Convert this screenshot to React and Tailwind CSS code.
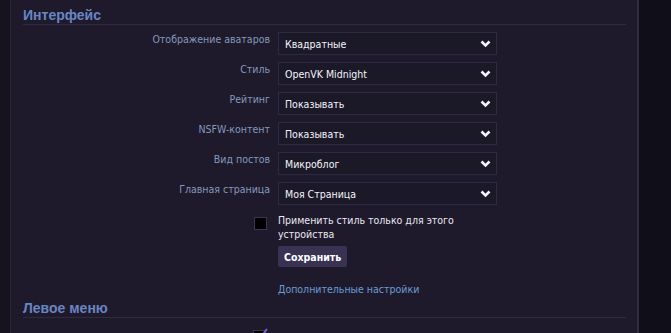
const rows = [
  ['Отображение аватаров', 'Квадратные'],
  ['Стиль', 'OpenVK Midnight'],
  ['Рейтинг', 'Показывать'],
  ['NSFW-контент', 'Показывать'],
  ['Вид постов', 'Микроблог'],
  ['Главная страница', 'Моя Страница'],
];

const Chevron = () => (
  <svg width="11" height="8" viewBox="0 0 11 8" className="shrink-0">
    <polyline points="1.5,1.5 5.5,5.5 9.5,1.5" fill="none" stroke="#f2f2f7" strokeWidth="2.6" />
  </svg>
);

const Select = ({ value }) => (
  <div className="w-[219px] h-[23px] flex items-center justify-between pl-[6px] pr-[5px] bg-[#1b1828] border border-[#2e2a41] text-[#f4f4fa]">
    <span>{value}</span>
    <Chevron />
  </div>
);

const Heading = ({ children }) => (
  <div
    className="border-b border-[#2e2a41] pt-[8px] pb-[2px] text-[14px] font-bold leading-[14px] text-[#6a85c4]"
    style={{ fontFamily: '"Liberation Sans", Arial, sans-serif' }}
  >
    {children}
  </div>
);

export default function App() {
  return (
    <div
      className="w-[671px] h-[333px] flex overflow-hidden bg-[#0f0e19] text-[10.5px] leading-[14px]"
      style={{ fontFamily: '"DejaVu Sans Condensed", "Liberation Sans", sans-serif' }}
    >
      <div className="w-[10px] shrink-0 bg-[#16131f]" />
      <div className="w-[629px] shrink-0 bg-[#1e1a2b] border-l border-r-2 border-l-[#2a2638] border-r-[#2f2b40] pl-[12px] pr-[11px]">
        <Heading>Интерфейс</Heading>

        <div className="mt-[7px] flex flex-col gap-[7px]">
          {rows.map(([label, value]) => (
            <div key={label} className="flex gap-[8px]">
              <div className="w-[247px] text-right text-[#8598bc]">{label}</div>
              <Select value={value} />
            </div>
          ))}

          <div className="flex gap-[8px]">
            <div className="w-[247px] flex justify-end pr-[3px] pt-[5px]">
              <div className="w-[13px] h-[13px] bg-black border border-[#3a3650]" />
            </div>
            <div className="w-[200px] pt-[1px] text-[#e8e8f0]">
              Применить стиль только для этого устройства
            </div>
          </div>
        </div>

        <div className="ml-[255px] mt-[5px]">
          <button className="h-[21px] px-[6px] rounded-[2px] bg-[#393253] text-white font-bold">
            Сохранить
          </button>
          <div className="mt-[15px] text-[#6b9bd6]">Дополнительные настройки</div>
        </div>

        <div className="-mt-[3px]">
          <Heading>Левое меню</Heading>
        </div>

        <div className="mt-[12px] flex gap-[8px]">
          <div className="w-[247px] flex justify-end pr-[4px]">
            <div className="relative w-[13px] h-[13px] bg-black border border-[#3a3650]">
              <svg width="14" height="12" viewBox="0 0 14 12" className="absolute -top-[3px] left-[1px]">
                <polyline points="2,7 5,10 12,1" fill="none" stroke="#7b5fd0" strokeWidth="2" />
              </svg>
            </div>
          </div>
          <div className="text-[#e8e8f0]">Мои Фотографии</div>
        </div>
      </div>
      <div className="flex-1" />
    </div>
  );
}
